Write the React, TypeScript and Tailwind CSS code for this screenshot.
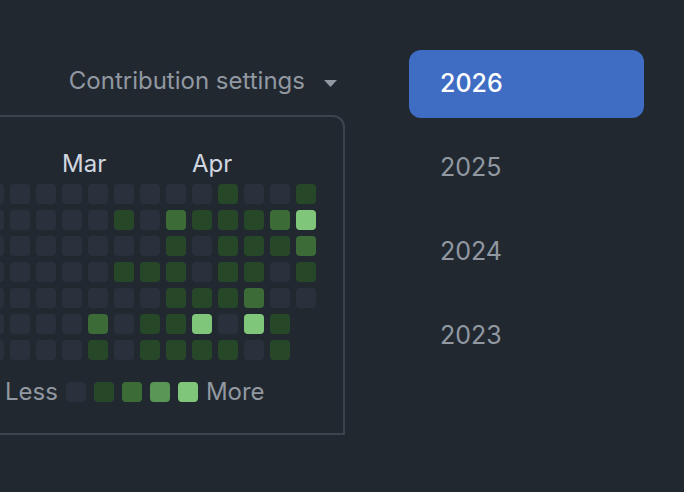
import React from 'react';

const LEVELS = [
  'bg-[#2a313c]',
  'bg-[#264828]',
  'bg-[#3c6b38]',
  'bg-[#5a9656]',
  'bg-[#80c67a]',
];

// rows top to bottom, one char per week column; x = no cell (future day)
const ROWS = [
  '00000000001001',
  '00000010211124',
  '00000000101112',
  '00000011101101',
  '00000000111200',
  '0000020114041x',
  '0000010111101x',
];

const YEARS = ['2026', '2025', '2024', '2023'];

function Cell({ level }: { level: string }) {
  if (level === 'x') return <div className="w-[20px] h-[20px]" />;
  return <div className={`w-[20px] h-[20px] rounded-[4px] ${LEVELS[Number(level)]}`} />;
}

function Graph() {
  const weeks = ROWS[0].split('').map((_, c) => ROWS.map((r) => r[c]));
  return (
    <div className="border-2 border-[#3d444d] rounded-tr-[12px] pl-[16px] pt-[29px] pb-[23px]">
      <div className="flex h-[36px] leading-[36px] text-[24px] text-[#d1d7e0]">
        <span className="ml-[104px] w-[130px]">Mar</span>
        <span>Apr</span>
      </div>
      <div className="flex gap-[6px] mt-[2px]">
        {weeks.map((days, i) => (
          <div key={i} className="flex flex-col gap-[6px]">
            {days.map((d, j) => (
              <Cell key={j} level={d} />
            ))}
          </div>
        ))}
      </div>
      <div className="flex items-center gap-[8px] h-[36px] mt-[14px] ml-[47px] text-[24px] text-[#9198a1]">
        <span>Less</span>
        {LEVELS.map((c) => (
          <div key={c} className={`w-[20px] h-[20px] rounded-[4px] ${c}`} />
        ))}
        <span>More</span>
      </div>
    </div>
  );
}

export default function App() {
  return (
    <div className="min-h-screen w-full overflow-hidden bg-[#212830] font-['Inter','Noto_Sans',sans-serif] flex items-start">
      <div className="ml-[-60px] w-[405px] shrink-0 pt-[63px]">
        <div className="flex items-center justify-end h-[36px] pr-[8px] text-[24px] text-[#9198a1]">
          <span>Contribution settings</span>
          <svg width="13" height="7" viewBox="0 0 13 7" className="ml-[19px] mt-[4px]">
            <path d="M0 0h13L6.5 7z" fill="#9198a1" />
          </svg>
        </div>
        <div className="mt-[16px]">
          <Graph />
        </div>
      </div>

      <div className="ml-[64px] pt-[50px] w-[235px] shrink-0 flex flex-col gap-[16px]">
        {YEARS.map((y, i) => (
          <div
            key={y}
            className={
              i === 0
                ? 'h-[68px] rounded-[12px] bg-[#3f6dc4] flex items-center pl-[31px] text-[25px] font-medium text-white'
                : 'h-[68px] rounded-[12px] flex items-center pl-[31px] text-[25px] text-[#9198a1]'
            }
          >
            {y}
          </div>
        ))}
      </div>
    </div>
  );
}
